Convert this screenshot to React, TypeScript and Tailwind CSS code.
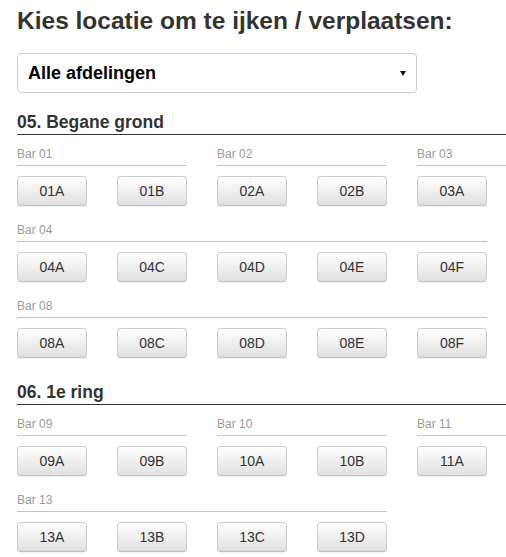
import React from 'react'

type Bar = { name: string; spots: string[] }
type Section = { title: string; bars: Bar[] }

const sections: Section[] = [
  {
    title: '05. Begane grond',
    bars: [
      { name: 'Bar 01', spots: ['01A', '01B'] },
      { name: 'Bar 02', spots: ['02A', '02B'] },
      { name: 'Bar 03', spots: ['03A'] },
      { name: 'Bar 04', spots: ['04A', '04C', '04D', '04E', '04F'] },
      { name: 'Bar 08', spots: ['08A', '08C', '08D', '08E', '08F'] },
    ],
  },
  {
    title: '06. 1e ring',
    bars: [
      { name: 'Bar 09', spots: ['09A', '09B'] },
      { name: 'Bar 10', spots: ['10A', '10B'] },
      { name: 'Bar 11', spots: ['11A'] },
      { name: 'Bar 13', spots: ['13A', '13B', '13C', '13D'] },
    ],
  },
]

function BarGroup({ bar }: { bar: Bar }) {
  return (
    <div className="flex flex-col min-w-[170px]">
      <div className="text-[12px] leading-[17px] pb-[2px] text-[#999] border-b border-[#c4c4c4]">
        {bar.name}
      </div>
      <div className="flex gap-[30px] mt-[10px]">
        {bar.spots.map((s) => (
          <button
            key={s}
            className="w-[70px] h-[30px] rounded-[4px] border border-[#ccc] border-b-[#bdbdbd] bg-gradient-to-b from-white to-[#e0e0e0] text-[14px] text-[#333] shadow-[inset_0_1px_0_rgba(255,255,255,0.15),0_1px_1px_rgba(0,0,0,0.06)]"
          >
            {s}
          </button>
        ))}
      </div>
    </div>
  )
}

export default function App() {
  return (
    <div className="w-full overflow-hidden bg-white font-['Liberation_Sans',Arial,sans-serif] text-[#333]">
      <div className="w-[617px] pl-[17px] pt-2 pb-4">
        <h3 className="text-[24.5px] leading-[26px] font-bold text-[#333]">
          Kies locatie om te ijken / verplaatsen:
        </h3>

        <div className="mt-[19px] w-[400px] h-[40px] rounded-[4px] border border-[#ccc] flex items-center justify-between pl-[10px] pr-[10px]">
          <span className="text-[18px] font-bold text-black">Alle afdelingen</span>
          <svg width="6" height="5" viewBox="0 0 6 5" className="mt-[1px]">
            <path d="M0 0 H6 L3 5 Z" fill="#111" />
          </svg>
        </div>

        {sections.map((sec, i) => (
          <div key={sec.title} className={i === 0 ? 'mt-[19px]' : 'mt-[24px]'}>
            <h4 className="text-[17.5px] leading-[20px] font-bold text-[#333] pb-[2px] border-b border-[#333]">
              {sec.title}
            </h4>
            <div className="flex flex-wrap gap-x-[30px] gap-y-4 mt-[11px]">
              {sec.bars.map((b) => (
                <BarGroup key={b.name} bar={b} />
              ))}
            </div>
          </div>
        ))}
      </div>
    </div>
  )
}
